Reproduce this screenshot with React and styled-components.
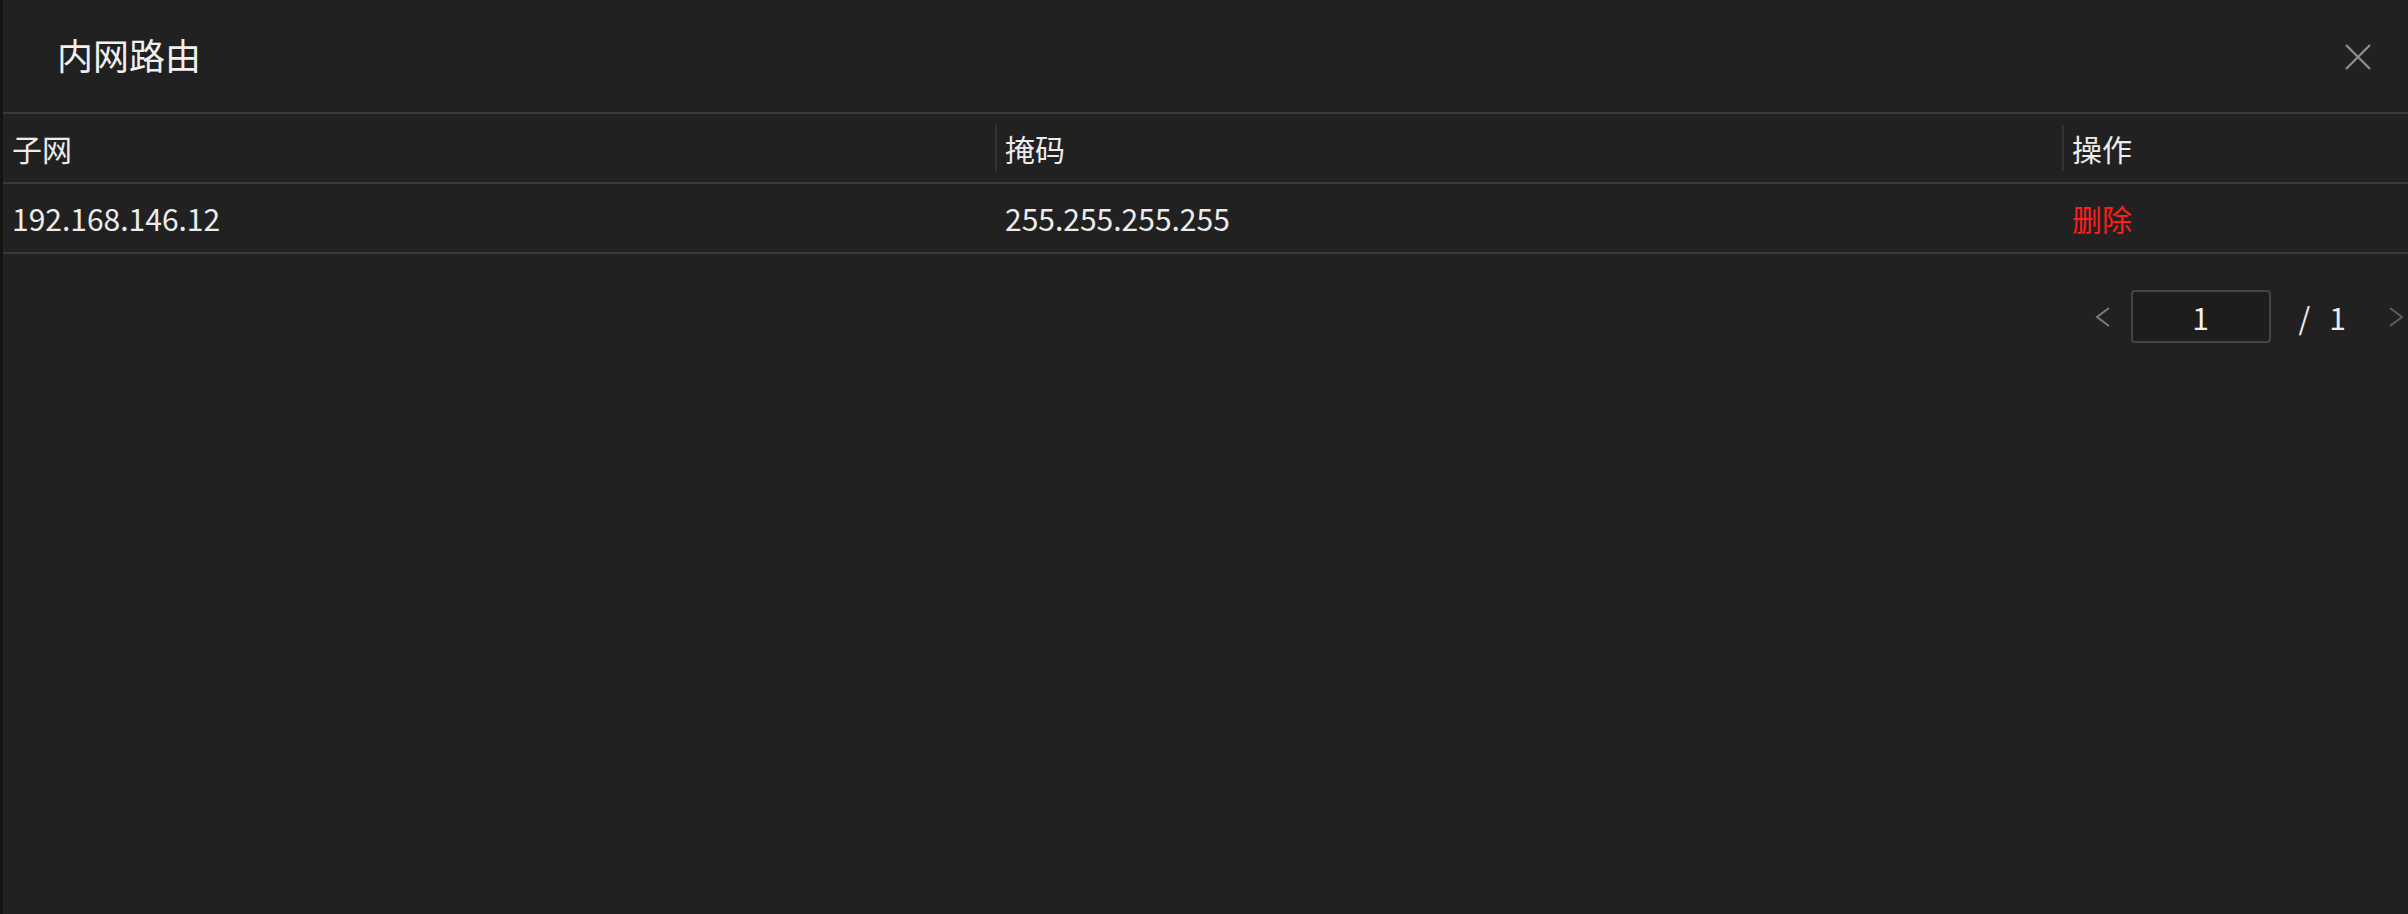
import React, { Component } from 'react'
import styled, { createGlobalStyle } from 'styled-components'

const GlobalStyle = createGlobalStyle`
  * {
    margin: 0;
    padding: 0;
    box-sizing: border-box;
  }
  body {
    background-color: #212121;
    font-family: "Noto Sans CJK SC", "Noto Sans", sans-serif;
  }
`

const Modal = styled.div`
  height: 914px;
  border-left: 3px solid #131313;
  background-color: #212121;
  color: #ececec;
`

const TitleBar = styled.div`
  height: 114px;
  display: flex;
  align-items: center;
  justify-content: space-between;
  padding: 0 36px 0 54px;
  border-bottom: 2px solid #3a3a3a;
`

const Title = styled.h2`
  font-size: 36px;
  font-weight: 400;
  color: #f0f0f0;
  line-height: 1;
  margin-top: -4px;
`

const CloseButton = styled.button`
  border: none;
  background: none;
  width: 28px;
  height: 28px;
  display: flex;
  margin-top: 2px;
  cursor: pointer;
`

const Row = styled.div`
  display: grid;
  grid-template-columns: 992px 1067px 1fr;
  height: 70px;
  border-bottom: 2px solid #3a3a3a;
`

const Cell = styled.div`
  position: relative;
  display: flex;
  align-items: center;
  padding-left: ${p => (p.first ? '9px' : '10px')};
  font-size: 30px;
  color: ${p => (p.danger ? '#ff1d1d' : '#ececec')};
  cursor: ${p => (p.danger ? 'pointer' : 'default')};

  ${p => p.divider && `
    &::before {
      content: "";
      position: absolute;
      left: 0;
      top: 11px;
      bottom: 11px;
      width: 2px;
      background-color: #333;
    }
  `}
`

const Pager = styled.div`
  display: flex;
  justify-content: flex-end;
  align-items: center;
  margin-top: 36px;
  padding-right: 4px;
  font-size: 30px;
  color: #ececec;
`

const Arrow = styled.button`
  border: none;
  background: none;
  width: 16px;
  height: 22px;
  display: flex;
  margin: ${p => p.margin};
`

const PageInput = styled.input`
  width: 140px;
  height: 53px;
  border: 2px solid #444;
  border-radius: 4px;
  background-color: #1d1d1d;
  color: #f2f2f2;
  font-family: inherit;
  font-size: 30px;
  text-align: center;
  outline: none;
`

const Slash = styled.span`
  margin-left: 28px;
  line-height: 1;
`

const Total = styled.span`
  margin-left: 19px;
  line-height: 1;
`

const Chevron = ({ dir, color }) => (
  <svg width="16" height="22" viewBox="0 0 16 22">
    <polyline
      points={dir === 'left' ? '14,2 2,11 14,20' : '2,2 14,11 2,20'}
      fill="none"
      stroke={color}
      strokeWidth="2"
    />
  </svg>
)

export default class App extends Component {
  state = {
    page: '1',
    routes: [{ subnet: '192.168.146.12', mask: '255.255.255.255', id: 1 }]
  }

  remove = (id) => {
    this.setState({ routes: this.state.routes.filter(r => r.id !== id) })
  }

  render() {
    let { routes, page } = this.state
    return (
      <Modal>
        <GlobalStyle />
        <TitleBar>
          <Title>内网路由</Title>
          <CloseButton>
            <svg width="28" height="28" viewBox="0 0 28 28">
              <path d="M2 2 L26 26 M26 2 L2 26" stroke="#8c8c8c" strokeWidth="2.4" />
            </svg>
          </CloseButton>
        </TitleBar>
        <Row>
          <Cell first>子网</Cell>
          <Cell divider>掩码</Cell>
          <Cell divider>操作</Cell>
        </Row>
        {routes.map(r => (
          <Row key={r.id}>
            <Cell first>{r.subnet}</Cell>
            <Cell>{r.mask}</Cell>
            <Cell danger onClick={() => this.remove(r.id)}>删除</Cell>
          </Row>
        ))}
        <Pager>
          <Arrow margin="0 20px 0 0">
            <Chevron dir="left" color="#7a7a7a" />
          </Arrow>
          <PageInput value={page} onChange={e => this.setState({ page: e.target.value })} />
          <Slash>/</Slash>
          <Total>1</Total>
          <Arrow margin="0 0 0 42px">
            <Chevron dir="right" color="#5e5e5e" />
          </Arrow>
        </Pager>
      </Modal>
    )
  }
}
